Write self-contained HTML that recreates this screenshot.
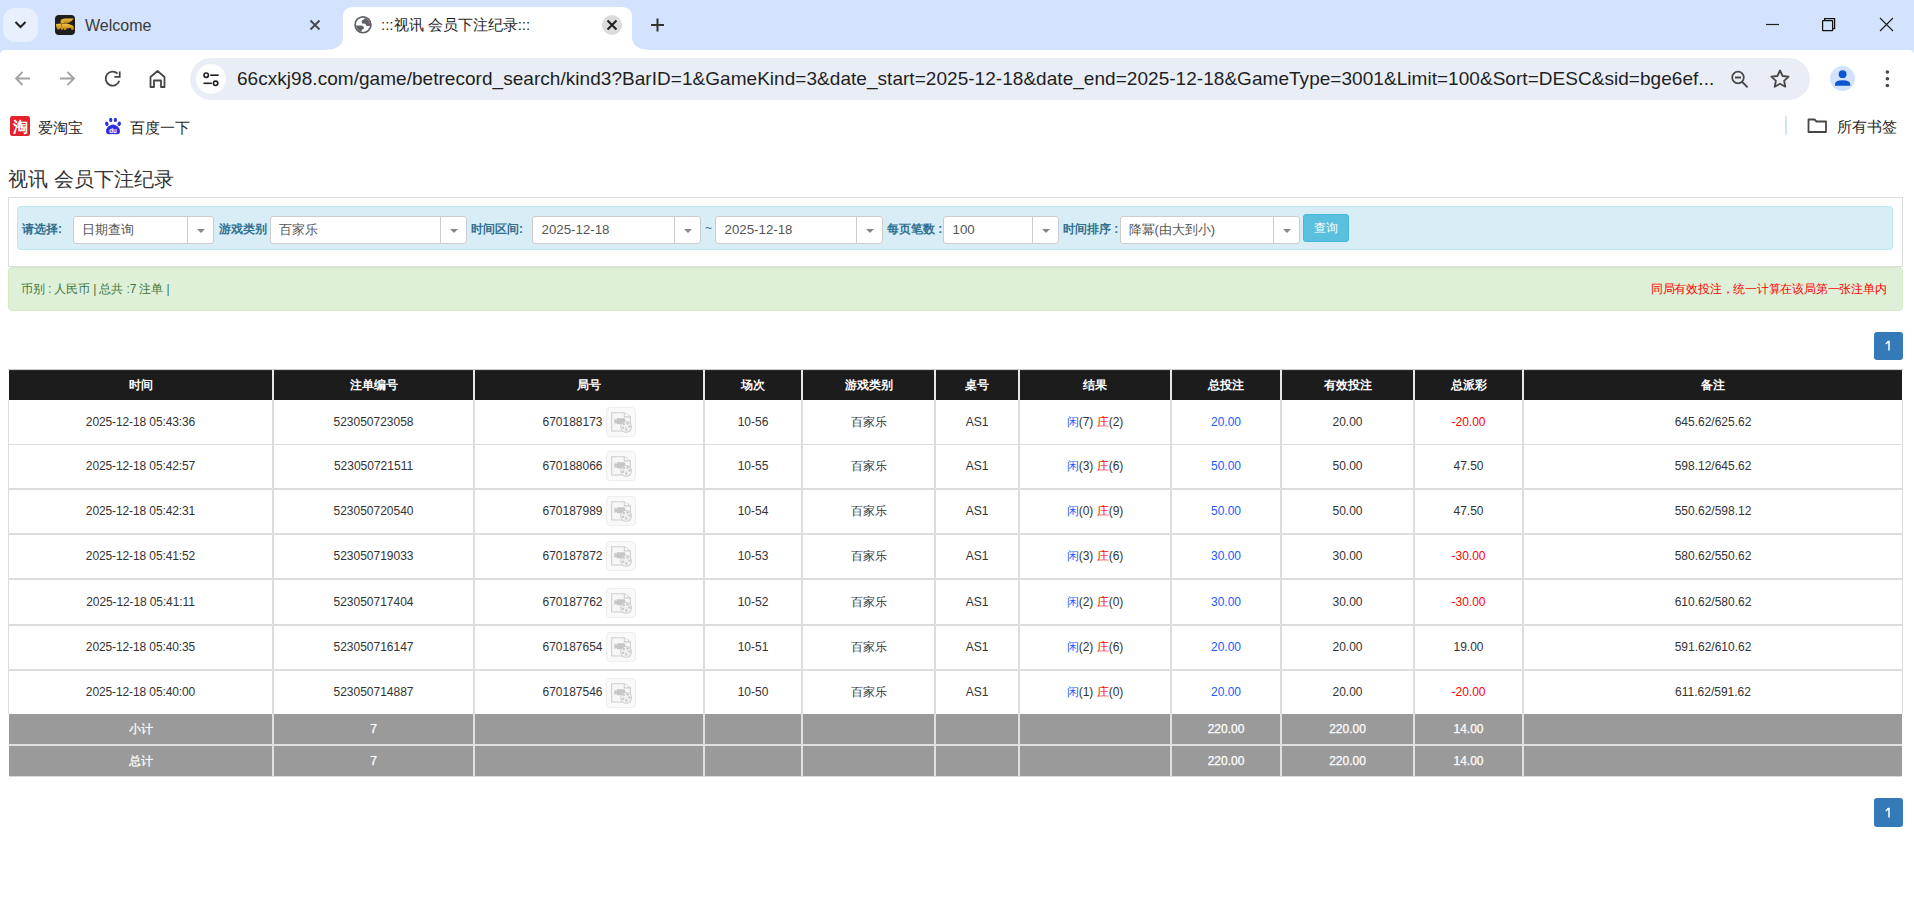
<!DOCTYPE html>
<html><head><meta charset="utf-8">
<style>
*{margin:0;padding:0;box-sizing:border-box}
html,body{width:1914px;height:903px;overflow:hidden;background:#fff;font-family:"Liberation Sans",sans-serif;color:#333}
.abs{position:absolute}
#tabstrip{position:absolute;left:0;top:0;width:1914px;height:62px;background:#d3e3fd}
#toolbar{position:absolute;left:0;top:50px;width:1914px;height:95px;background:#fff;border-radius:5px 5px 0 0}
.ctext{font-size:15px;color:#1f1f1f;white-space:nowrap}
#omni{position:absolute;left:190px;top:58px;width:1620px;height:42px;border-radius:21px;background:#e9eef6}
#url{position:absolute;left:237px;top:68px;font-size:19px;color:#1f1f1f;white-space:nowrap;letter-spacing:0.04px}
/* page */
#title{position:absolute;left:8px;top:166px;font-size:20px;color:#333;white-space:nowrap}
#panel{position:absolute;left:8px;top:197px;width:1895px;height:70px;border:1px solid #ddd}
#info{position:absolute;left:17px;top:206px;width:1876px;height:44px;background:#d9edf7;border:1px solid #bce8f1;border-radius:4px}
.lbl{position:absolute;top:221px;font-size:12px;font-weight:bold;color:#31708f;white-space:nowrap}
.sel{position:absolute;top:216px;height:28px;background:#fff;border:1px solid #ccc;border-radius:3px;font-size:13px;color:#555;white-space:nowrap}
.sel span{position:absolute;left:9px;top:5px}
.sel span.cj{left:7.5px;top:3.5px}
.sel span.nm{left:8.5px;top:4.5px;font-size:13.3px}
.sel i{position:absolute;top:0;right:0;width:26.5px;height:26px;border-left:1px solid #ccc}
.sel i:after{content:"";position:absolute;left:9px;top:11.5px;border-left:4px solid transparent;border-right:4px solid transparent;border-top:4px solid #888}
#btn{position:absolute;left:1303px;top:214px;width:46px;height:28px;background:#5bc0de;border:1px solid #46b8da;border-radius:3px;color:#fff;font-size:12px;text-align:center;line-height:26px}
#green{position:absolute;left:8px;top:267px;width:1895px;height:44px;background:#dff0d8;border:1px solid #d6e9c6;border-radius:4px}
#gtext{position:absolute;left:21px;top:280.5px;font-size:12px;color:#3c763d;white-space:nowrap;letter-spacing:-0.12px}
#rtext{position:absolute;right:27.5px;top:281px;font-size:12px;color:#f00;white-space:nowrap;letter-spacing:-0.22px}
.page1{position:absolute;left:1874px;width:29px;height:28px;background:#337ab7;border-radius:3px}
table{position:absolute;left:8px;top:370px;border-collapse:collapse;table-layout:fixed;width:1895px;font-size:12px;color:#333}
th{background:#1c1c1c;color:#fff;height:30px;font-weight:bold;border-left:2px solid #eee;border-right:2px solid #eee}
td{text-align:center;height:45px;border:1px solid #ddd}

.t{position:absolute;width:400px;height:16px;line-height:16px;text-align:center;font-size:12px;color:#333;white-space:nowrap}
.th{color:#fff;font-weight:bold}
.tw{color:#fff;-webkit-text-stroke:0.25px #fff}
.b{color:#1a5cff}
.r{color:#f00}
.ico{display:inline-block;vertical-align:middle;width:30px;height:30px;margin:-7px 0 -7px 3px;border:1px solid #eee;background:#f9f9f9;border-radius:4px;position:relative}
.ico svg{position:absolute;left:-1px;top:-1px}
</style></head><body>
<div id="tabstrip"></div>
<div id="toolbar"></div>
<div id="omni"></div>
<svg class="abs" style="left:0;top:0" width="1914" height="145" viewBox="0 0 1914 145">
  <rect x="3" y="8" width="35" height="34" rx="12" fill="#e8f0fe"/>
  <path d="M15.5 22l5 5 5-5" fill="none" stroke="#1f1f1f" stroke-width="2"/>
  <!-- active tab -->
  <path d="M323 50 Q343 50 343 37 V17 Q343 7 353 7 H622 Q632 7 632 17 V37 Q632 50 652 50 Z" fill="#fff"/>
  <!-- welcome favicon -->
  <defs><linearGradient id="gold" x1="0" y1="0" x2="0" y2="1"><stop offset="0" stop-color="#f2c744"/><stop offset="1" stop-color="#b97f12"/></linearGradient><clipPath id="gclip"><circle cx="363" cy="24.8" r="7.1"/></clipPath></defs>
  <rect x="55" y="15" width="20" height="20" rx="4" fill="#1e1e1e"/>
  <path d="M60.5 20 Q63 17.8 67 18.6 L73.8 18.4 Q72 21.5 68 23.2 L63 23 Z" fill="url(#gold)"/>
  <circle cx="62.3" cy="21.8" r="1.9" fill="#e0ad2a"/>
  <path d="M56 24 L61.5 23.5 L61 28 Q59 30 57.5 29.5 Q56 27 56 24Z" fill="url(#gold)"/>
  <path d="M62 24 Q66 23 70 24.5 Q73.5 25 73.8 27.5 L73.5 30 L71.5 30 L71 28 L66.5 28.5 L66 30 L64 30 L63.5 28 L62.5 30 L61 30 Q61 26 62 24Z" fill="url(#gold)"/>
  <!-- inactive close -->
  <path d="M310.5 20.5l9 9M319.5 20.5l-9 9" stroke="#474747" stroke-width="1.8"/>
  <!-- globe -->
  <circle cx="363" cy="24.8" r="8.8" fill="#5f6368"/>
  <circle cx="363" cy="24.8" r="7.1" fill="#fff"/>
  <g clip-path="url(#gclip)" fill="#5f6368"><path d="M364.5 15 L364.5 19 Q363 19.6 362 20.5 Q361.2 22.5 362.3 23.6 L365 23.8 Q366.3 24.5 366.5 26 L372 26 L372 15 Z"/><path d="M353 25.5 L361.5 25.5 Q363.5 26 364 27.5 Q364 29.3 362.3 29.5 Q361.2 30.2 361.5 34 L353 34 Z"/></g>
  <!-- active close -->
  <circle cx="612" cy="25" r="10" fill="#dcdcdc"/>
  <path d="M607.5 20.5l9 9M616.5 20.5l-9 9" stroke="#1f1f1f" stroke-width="2"/>
  <!-- plus -->
  <path d="M657.5 18.5v13M651 25h13" stroke="#333" stroke-width="2"/>
  <!-- window controls -->
  <path d="M1766 24.5h13" stroke="#1f1f1f" stroke-width="1.2"/>
  <rect x="1822.6" y="20.6" width="10" height="10" rx="0.4" fill="none" stroke="#111" stroke-width="1.25"/>
  <path d="M1824.6 20.6V18.6H1834.6V28.6H1832.6" fill="none" stroke="#111" stroke-width="1.25"/>
  <path d="M1880 18l13 13M1893 18l-13 13" stroke="#1f1f1f" stroke-width="1.2"/>
  <!-- toolbar icons -->
  <path d="M30 78.5H16M22.5 72l-6.5 6.5 6.5 6.5" fill="none" stroke="#a3a3a3" stroke-width="1.8"/>
  <path d="M60 78.5h14M67.5 72l6.5 6.5-6.5 6.5" fill="none" stroke="#a3a3a3" stroke-width="1.8"/>
  <path d="M119.3 80.8 A7 7 0 1 1 117.5 73.6" fill="none" stroke="#474747" stroke-width="1.8"/>
  <path d="M114.3 76.9 H119.7 V71.4" fill="none" stroke="#474747" stroke-width="1.8"/>
  <path d="M150.5 87 V77 L157.5 71 L164.5 77 V87 H161 V80.5 H154 V87 Z" fill="none" stroke="#474747" stroke-width="1.8" stroke-linejoin="round"/>
  <circle cx="211" cy="79" r="15" fill="#fdfdfe"/>
  <circle cx="206.2" cy="75.2" r="2.2" fill="none" stroke="#1f1f1f" stroke-width="1.6"/>
  <path d="M210.2 75.2h8.5" stroke="#1f1f1f" stroke-width="1.6"/>
  <circle cx="215.6" cy="83.3" r="2.2" fill="none" stroke="#1f1f1f" stroke-width="1.6"/>
  <path d="M203.5 83.3h8.3" stroke="#1f1f1f" stroke-width="1.6"/>
  <!-- zoom -->
  <circle cx="1738" cy="77.5" r="5.8" fill="none" stroke="#474747" stroke-width="1.8"/>
  <path d="M1735 77.5h6M1742.3 82l5.3 5.3" stroke="#474747" stroke-width="1.8"/>
  <!-- star -->
  <path d="M1780 70.5l2.6 5.5 6 .7-4.5 4.1 1.2 5.9-5.3-3-5.3 3 1.2-5.9-4.5-4.1 6-.7z" fill="none" stroke="#474747" stroke-width="1.8" stroke-linejoin="round"/>
  <!-- profile -->
  <circle cx="1842.5" cy="78.5" r="12.5" fill="#d3e3fd"/>
  <circle cx="1842.6" cy="74.2" r="3.9" fill="#0b57d0"/>
  <path d="M1835 85.8 V84.2 Q1835 80.3 1842.6 80.3 Q1850.2 80.3 1850.2 84.2 V85.8 Z" fill="#0b57d0"/>
  <circle cx="1887.4" cy="72" r="1.8" fill="#474747"/><circle cx="1887.4" cy="78.7" r="1.8" fill="#474747"/><circle cx="1887.4" cy="85.5" r="1.8" fill="#474747"/>
  <!-- bookmark bar -->
  <rect x="10" y="116" width="20" height="20" rx="2.5" fill="#e4212c"/>
  <text x="20" y="132" font-size="15" font-weight="bold" fill="#fff" text-anchor="middle" font-family="Liberation Sans">淘</text>
  <g fill="#2932e1">
    <ellipse cx="106.8" cy="123.8" rx="1.7" ry="2.2" transform="rotate(-20 106.8 123.8)"/><ellipse cx="110.7" cy="119.9" rx="1.6" ry="2.2"/><ellipse cx="115.4" cy="119.9" rx="1.6" ry="2.2"/><ellipse cx="119.2" cy="123.8" rx="1.7" ry="2.2" transform="rotate(20 119.2 123.8)"/>
    <path d="M106 131.3 Q106 127.5 110 125.6 Q113 123.6 116 125.6 Q120 127.5 120 131.3 Q120 134.5 116.5 134.2 Q113 133.7 109.5 134.2 Q106 134.5 106 131.3Z"/>
  </g>
  <text x="113" y="132.6" font-size="6.3" font-weight="bold" fill="#fff" text-anchor="middle" font-family="Liberation Sans">du</text>
  <rect x="1785" y="116" width="2" height="19" rx="1" fill="#d3e3fd"/>
  <path d="M1808.5 119.5 h6 l2 2 h9.5 v10.5 h-17.5 z" fill="none" stroke="#474747" stroke-width="1.8" stroke-linejoin="round"/>
</svg>
<div class="abs ctext" style="left:85px;top:17px;color:#3a3a3a;font-size:16px">Welcome</div>
<div class="abs ctext" style="left:381px;top:16px;color:#1f1f1f">:::视讯 会员下注纪录:::</div>
<div class="abs ctext" style="left:37.5px;top:117.5px;font-size:15.3px">爱淘宝</div>
<div class="abs ctext" style="left:130px;top:117.5px;font-size:15.3px">百度一下</div>
<div class="abs ctext" style="left:1837px;top:117px;font-size:15.3px">所有书签</div>

<div id="url">66cxkj98.com/game/betrecord_search/kind3?BarID=1&amp;GameKind=3&amp;date_start=2025-12-18&amp;date_end=2025-12-18&amp;GameType=3001&amp;Limit=100&amp;Sort=DESC&amp;sid=bge6ef...</div>

<div id="title">视讯 会员下注纪录</div>
<div id="panel"></div>
<div id="info"></div>
<div id="green"></div>
<div class="lbl" style="left:22px">请选择:</div>
<div class="sel" style="left:73px;width:141px"><span class="cj">日期查询</span><i></i></div>
<div class="lbl" style="left:219px">游戏类别</div>
<div class="sel" style="left:270px;width:197px"><span class="cj">百家乐</span><i></i></div>
<div class="lbl" style="left:471px">时间区间:</div>
<div class="sel" style="left:532px;width:169px"><span class="nm">2025-12-18</span><i></i></div>
<div class="lbl" style="left:705px;font-weight:normal">~</div>
<div class="sel" style="left:715px;width:168px"><span class="nm">2025-12-18</span><i></i></div>
<div class="lbl" style="left:887px">每页笔数 :</div>
<div class="sel" style="left:943px;width:116px"><span class="nm">100</span><i></i></div>
<div class="lbl" style="left:1063px">时间排序 :</div>
<div class="sel" style="left:1120px;width:180px"><span class="cj" style="top:4px">降冪(由大到小)</span><i></i></div>
<div id="btn">查询</div>

<div id="gtext">币别 : 人民币 | 总共 :7 注单 |</div>
<div id="rtext">同局有效投注，统一计算在该局第一张注单内</div>
<div class="page1" style="top:332px"><svg width="29" height="28" style="position:absolute;left:0;top:0"><path d="M11.7 11.9 Q13.5 11 14.3 9.4 H15 V18.6" fill="none" stroke="#fff" stroke-width="1.5"/></svg></div>
<div class="page1" style="top:798px;height:29px"><svg width="29" height="28" style="position:absolute;left:0;top:0.5px"><path d="M11.7 11.9 Q13.5 11 14.3 9.4 H15 V18.6" fill="none" stroke="#fff" stroke-width="1.5"/></svg></div>
<div class="abs" style="left:8px;top:369px;width:1895px;height:1px;background:#c8c8c8"></div>
<div class="abs" style="left:9px;top:370px;width:1893px;height:30px;background:#1c1c1c;border-top:1px solid #2a2a2a"></div>
<div class="abs" style="left:8px;top:400px;width:1px;height:314px;background:#ddd"></div>
<div class="abs" style="left:1902px;top:400px;width:1px;height:314px;background:#ddd"></div>
<div class="abs" style="left:272px;top:370px;width:2px;height:30px;background:#e8e8e8"></div>
<div class="abs" style="left:272px;top:400px;width:2px;height:314px;background:#ddd"></div>
<div class="abs" style="left:473px;top:370px;width:2px;height:30px;background:#e8e8e8"></div>
<div class="abs" style="left:473px;top:400px;width:2px;height:314px;background:#ddd"></div>
<div class="abs" style="left:703px;top:370px;width:2px;height:30px;background:#e8e8e8"></div>
<div class="abs" style="left:703px;top:400px;width:2px;height:314px;background:#ddd"></div>
<div class="abs" style="left:801px;top:370px;width:2px;height:30px;background:#e8e8e8"></div>
<div class="abs" style="left:801px;top:400px;width:2px;height:314px;background:#ddd"></div>
<div class="abs" style="left:934px;top:370px;width:2px;height:30px;background:#e8e8e8"></div>
<div class="abs" style="left:934px;top:400px;width:2px;height:314px;background:#ddd"></div>
<div class="abs" style="left:1018px;top:370px;width:2px;height:30px;background:#e8e8e8"></div>
<div class="abs" style="left:1018px;top:400px;width:2px;height:314px;background:#ddd"></div>
<div class="abs" style="left:1170px;top:370px;width:2px;height:30px;background:#e8e8e8"></div>
<div class="abs" style="left:1170px;top:400px;width:2px;height:314px;background:#ddd"></div>
<div class="abs" style="left:1280px;top:370px;width:2px;height:30px;background:#e8e8e8"></div>
<div class="abs" style="left:1280px;top:400px;width:2px;height:314px;background:#ddd"></div>
<div class="abs" style="left:1413px;top:370px;width:2px;height:30px;background:#e8e8e8"></div>
<div class="abs" style="left:1413px;top:400px;width:2px;height:314px;background:#ddd"></div>
<div class="abs" style="left:1522px;top:370px;width:2px;height:30px;background:#e8e8e8"></div>
<div class="abs" style="left:1522px;top:400px;width:2px;height:314px;background:#ddd"></div>
<div class="abs" style="left:8px;top:444px;width:1895px;height:1px;background:#ddd"></div>
<div class="abs" style="left:8px;top:488px;width:1895px;height:2px;background:#ddd"></div>
<div class="abs" style="left:8px;top:533px;width:1895px;height:2px;background:#ddd"></div>
<div class="abs" style="left:8px;top:578px;width:1895px;height:2px;background:#ddd"></div>
<div class="abs" style="left:8px;top:624px;width:1895px;height:2px;background:#ddd"></div>
<div class="abs" style="left:8px;top:669px;width:1895px;height:2px;background:#ddd"></div>
<div class="abs" style="left:9px;top:714px;width:1893px;height:30px;background:#9a9a9a"></div>
<div class="abs" style="left:9px;top:746px;width:1893px;height:30px;background:#9a9a9a"></div>
<div class="abs" style="left:9px;top:776px;width:1893px;height:1px;background:#d8d8d8;border-radius:0 0 2px 2px"></div>
<div class="abs" style="left:9px;top:744px;width:1893px;height:2px;background:#e0e0e0"></div>
<div class="abs" style="left:272px;top:714px;width:2px;height:62px;background:#e0e0e0"></div>
<div class="abs" style="left:473px;top:714px;width:2px;height:62px;background:#e0e0e0"></div>
<div class="abs" style="left:703px;top:714px;width:2px;height:62px;background:#e0e0e0"></div>
<div class="abs" style="left:801px;top:714px;width:2px;height:62px;background:#e0e0e0"></div>
<div class="abs" style="left:934px;top:714px;width:2px;height:62px;background:#e0e0e0"></div>
<div class="abs" style="left:1018px;top:714px;width:2px;height:62px;background:#e0e0e0"></div>
<div class="abs" style="left:1170px;top:714px;width:2px;height:62px;background:#e0e0e0"></div>
<div class="abs" style="left:1280px;top:714px;width:2px;height:62px;background:#e0e0e0"></div>
<div class="abs" style="left:1413px;top:714px;width:2px;height:62px;background:#e0e0e0"></div>
<div class="abs" style="left:1522px;top:714px;width:2px;height:62px;background:#e0e0e0"></div>
<div class="t th" style="left:-59.5px;top:376.5px;">时间</div>
<div class="t th" style="left:173.5px;top:376.5px;">注单编号</div>
<div class="t th" style="left:389.0px;top:376.5px;">局号</div>
<div class="t th" style="left:553.0px;top:376.5px;">场次</div>
<div class="t th" style="left:668.5px;top:376.5px;">游戏类别</div>
<div class="t th" style="left:777.0px;top:376.5px;">桌号</div>
<div class="t th" style="left:895.0px;top:376.5px;">结果</div>
<div class="t th" style="left:1026.0px;top:376.5px;">总投注</div>
<div class="t th" style="left:1147.5px;top:376.5px;">有效投注</div>
<div class="t th" style="left:1268.5px;top:376.5px;">总派彩</div>
<div class="t th" style="left:1513.0px;top:376.5px;">备注</div>
<div class="t" style="left:-59.5px;top:413.5px;letter-spacing:-0.11px">2025-12-18 05:43:36</div>
<div class="t" style="left:173.5px;top:413.5px;">523050723058</div>
<div class="t" style="left:389.0px;top:413.5px;">670188173<span class="ico"><svg width="30" height="30" viewBox="0 0 30 30"><path d="M5.7 5.7h12.6l6 4.2v14.1h-18.6z" fill="#f7f7f7" stroke="#cdcdcd" stroke-width="1.1"/><path d="M18.3 5.7v4.2h6" fill="#fbfbfb" stroke="#cdcdcd" stroke-width="1.1"/><path d="M8.4 11.6 L10.2 13 H10.6 V11.3 H18.6 L19.3 12.3 V17.3 H10.6 V15.8 H10.2 L8.4 17.2 Z" fill="#c6c6c6"/><circle cx="20.1" cy="19.9" r="5.4" fill="#f4f4f4" stroke="#cdcdcd" stroke-width="1"/><g fill="#c9c9c9"><circle cx="17.8" cy="17.1" r="1.25"/><circle cx="21.5" cy="16.4" r="1.25"/><circle cx="23.4" cy="19.6" r="1.25"/><circle cx="20.3" cy="22.6" r="1.25"/><circle cx="17.1" cy="20.8" r="1.25"/><circle cx="20.1" cy="19.9" r="0.5"/></g></svg></span></div>
<div class="t" style="left:553.0px;top:413.5px;">10-56</div>
<div class="t" style="left:668.5px;top:413.5px;">百家乐</div>
<div class="t" style="left:777.0px;top:413.5px;">AS1</div>
<div class="t" style="left:895.0px;top:413.5px;"><span class="b">闲</span>(7) <span class="r">庄</span>(2)</div>
<div class="t" style="left:1026.0px;top:413.5px;"><span class="b">20.00</span></div>
<div class="t" style="left:1147.5px;top:413.5px;">20.00</div>
<div class="t" style="left:1268.5px;top:413.5px;"><span class="r">-20.00</span></div>
<div class="t" style="left:1513.0px;top:413.5px;">645.62/625.62</div>
<div class="t" style="left:-59.5px;top:457.5px;letter-spacing:-0.11px">2025-12-18 05:42:57</div>
<div class="t" style="left:173.5px;top:457.5px;">523050721511</div>
<div class="t" style="left:389.0px;top:457.5px;">670188066<span class="ico"><svg width="30" height="30" viewBox="0 0 30 30"><path d="M5.7 5.7h12.6l6 4.2v14.1h-18.6z" fill="#f7f7f7" stroke="#cdcdcd" stroke-width="1.1"/><path d="M18.3 5.7v4.2h6" fill="#fbfbfb" stroke="#cdcdcd" stroke-width="1.1"/><path d="M8.4 11.6 L10.2 13 H10.6 V11.3 H18.6 L19.3 12.3 V17.3 H10.6 V15.8 H10.2 L8.4 17.2 Z" fill="#c6c6c6"/><circle cx="20.1" cy="19.9" r="5.4" fill="#f4f4f4" stroke="#cdcdcd" stroke-width="1"/><g fill="#c9c9c9"><circle cx="17.8" cy="17.1" r="1.25"/><circle cx="21.5" cy="16.4" r="1.25"/><circle cx="23.4" cy="19.6" r="1.25"/><circle cx="20.3" cy="22.6" r="1.25"/><circle cx="17.1" cy="20.8" r="1.25"/><circle cx="20.1" cy="19.9" r="0.5"/></g></svg></span></div>
<div class="t" style="left:553.0px;top:457.5px;">10-55</div>
<div class="t" style="left:668.5px;top:457.5px;">百家乐</div>
<div class="t" style="left:777.0px;top:457.5px;">AS1</div>
<div class="t" style="left:895.0px;top:457.5px;"><span class="b">闲</span>(3) <span class="r">庄</span>(6)</div>
<div class="t" style="left:1026.0px;top:457.5px;"><span class="b">50.00</span></div>
<div class="t" style="left:1147.5px;top:457.5px;">50.00</div>
<div class="t" style="left:1268.5px;top:457.5px;"><span class="">47.50</span></div>
<div class="t" style="left:1513.0px;top:457.5px;">598.12/645.62</div>
<div class="t" style="left:-59.5px;top:502.5px;letter-spacing:-0.11px">2025-12-18 05:42:31</div>
<div class="t" style="left:173.5px;top:502.5px;">523050720540</div>
<div class="t" style="left:389.0px;top:502.5px;">670187989<span class="ico"><svg width="30" height="30" viewBox="0 0 30 30"><path d="M5.7 5.7h12.6l6 4.2v14.1h-18.6z" fill="#f7f7f7" stroke="#cdcdcd" stroke-width="1.1"/><path d="M18.3 5.7v4.2h6" fill="#fbfbfb" stroke="#cdcdcd" stroke-width="1.1"/><path d="M8.4 11.6 L10.2 13 H10.6 V11.3 H18.6 L19.3 12.3 V17.3 H10.6 V15.8 H10.2 L8.4 17.2 Z" fill="#c6c6c6"/><circle cx="20.1" cy="19.9" r="5.4" fill="#f4f4f4" stroke="#cdcdcd" stroke-width="1"/><g fill="#c9c9c9"><circle cx="17.8" cy="17.1" r="1.25"/><circle cx="21.5" cy="16.4" r="1.25"/><circle cx="23.4" cy="19.6" r="1.25"/><circle cx="20.3" cy="22.6" r="1.25"/><circle cx="17.1" cy="20.8" r="1.25"/><circle cx="20.1" cy="19.9" r="0.5"/></g></svg></span></div>
<div class="t" style="left:553.0px;top:502.5px;">10-54</div>
<div class="t" style="left:668.5px;top:502.5px;">百家乐</div>
<div class="t" style="left:777.0px;top:502.5px;">AS1</div>
<div class="t" style="left:895.0px;top:502.5px;"><span class="b">闲</span>(0) <span class="r">庄</span>(9)</div>
<div class="t" style="left:1026.0px;top:502.5px;"><span class="b">50.00</span></div>
<div class="t" style="left:1147.5px;top:502.5px;">50.00</div>
<div class="t" style="left:1268.5px;top:502.5px;"><span class="">47.50</span></div>
<div class="t" style="left:1513.0px;top:502.5px;">550.62/598.12</div>
<div class="t" style="left:-59.5px;top:547.5px;letter-spacing:-0.11px">2025-12-18 05:41:52</div>
<div class="t" style="left:173.5px;top:547.5px;">523050719033</div>
<div class="t" style="left:389.0px;top:547.5px;">670187872<span class="ico"><svg width="30" height="30" viewBox="0 0 30 30"><path d="M5.7 5.7h12.6l6 4.2v14.1h-18.6z" fill="#f7f7f7" stroke="#cdcdcd" stroke-width="1.1"/><path d="M18.3 5.7v4.2h6" fill="#fbfbfb" stroke="#cdcdcd" stroke-width="1.1"/><path d="M8.4 11.6 L10.2 13 H10.6 V11.3 H18.6 L19.3 12.3 V17.3 H10.6 V15.8 H10.2 L8.4 17.2 Z" fill="#c6c6c6"/><circle cx="20.1" cy="19.9" r="5.4" fill="#f4f4f4" stroke="#cdcdcd" stroke-width="1"/><g fill="#c9c9c9"><circle cx="17.8" cy="17.1" r="1.25"/><circle cx="21.5" cy="16.4" r="1.25"/><circle cx="23.4" cy="19.6" r="1.25"/><circle cx="20.3" cy="22.6" r="1.25"/><circle cx="17.1" cy="20.8" r="1.25"/><circle cx="20.1" cy="19.9" r="0.5"/></g></svg></span></div>
<div class="t" style="left:553.0px;top:547.5px;">10-53</div>
<div class="t" style="left:668.5px;top:547.5px;">百家乐</div>
<div class="t" style="left:777.0px;top:547.5px;">AS1</div>
<div class="t" style="left:895.0px;top:547.5px;"><span class="b">闲</span>(3) <span class="r">庄</span>(6)</div>
<div class="t" style="left:1026.0px;top:547.5px;"><span class="b">30.00</span></div>
<div class="t" style="left:1147.5px;top:547.5px;">30.00</div>
<div class="t" style="left:1268.5px;top:547.5px;"><span class="r">-30.00</span></div>
<div class="t" style="left:1513.0px;top:547.5px;">580.62/550.62</div>
<div class="t" style="left:-59.5px;top:593.8px;letter-spacing:-0.11px">2025-12-18 05:41:11</div>
<div class="t" style="left:173.5px;top:593.8px;">523050717404</div>
<div class="t" style="left:389.0px;top:593.8px;">670187762<span class="ico"><svg width="30" height="30" viewBox="0 0 30 30"><path d="M5.7 5.7h12.6l6 4.2v14.1h-18.6z" fill="#f7f7f7" stroke="#cdcdcd" stroke-width="1.1"/><path d="M18.3 5.7v4.2h6" fill="#fbfbfb" stroke="#cdcdcd" stroke-width="1.1"/><path d="M8.4 11.6 L10.2 13 H10.6 V11.3 H18.6 L19.3 12.3 V17.3 H10.6 V15.8 H10.2 L8.4 17.2 Z" fill="#c6c6c6"/><circle cx="20.1" cy="19.9" r="5.4" fill="#f4f4f4" stroke="#cdcdcd" stroke-width="1"/><g fill="#c9c9c9"><circle cx="17.8" cy="17.1" r="1.25"/><circle cx="21.5" cy="16.4" r="1.25"/><circle cx="23.4" cy="19.6" r="1.25"/><circle cx="20.3" cy="22.6" r="1.25"/><circle cx="17.1" cy="20.8" r="1.25"/><circle cx="20.1" cy="19.9" r="0.5"/></g></svg></span></div>
<div class="t" style="left:553.0px;top:593.8px;">10-52</div>
<div class="t" style="left:668.5px;top:593.8px;">百家乐</div>
<div class="t" style="left:777.0px;top:593.8px;">AS1</div>
<div class="t" style="left:895.0px;top:593.8px;"><span class="b">闲</span>(2) <span class="r">庄</span>(0)</div>
<div class="t" style="left:1026.0px;top:593.8px;"><span class="b">30.00</span></div>
<div class="t" style="left:1147.5px;top:593.8px;">30.00</div>
<div class="t" style="left:1268.5px;top:593.8px;"><span class="r">-30.00</span></div>
<div class="t" style="left:1513.0px;top:593.8px;">610.62/580.62</div>
<div class="t" style="left:-59.5px;top:638.5px;letter-spacing:-0.11px">2025-12-18 05:40:35</div>
<div class="t" style="left:173.5px;top:638.5px;">523050716147</div>
<div class="t" style="left:389.0px;top:638.5px;">670187654<span class="ico"><svg width="30" height="30" viewBox="0 0 30 30"><path d="M5.7 5.7h12.6l6 4.2v14.1h-18.6z" fill="#f7f7f7" stroke="#cdcdcd" stroke-width="1.1"/><path d="M18.3 5.7v4.2h6" fill="#fbfbfb" stroke="#cdcdcd" stroke-width="1.1"/><path d="M8.4 11.6 L10.2 13 H10.6 V11.3 H18.6 L19.3 12.3 V17.3 H10.6 V15.8 H10.2 L8.4 17.2 Z" fill="#c6c6c6"/><circle cx="20.1" cy="19.9" r="5.4" fill="#f4f4f4" stroke="#cdcdcd" stroke-width="1"/><g fill="#c9c9c9"><circle cx="17.8" cy="17.1" r="1.25"/><circle cx="21.5" cy="16.4" r="1.25"/><circle cx="23.4" cy="19.6" r="1.25"/><circle cx="20.3" cy="22.6" r="1.25"/><circle cx="17.1" cy="20.8" r="1.25"/><circle cx="20.1" cy="19.9" r="0.5"/></g></svg></span></div>
<div class="t" style="left:553.0px;top:638.5px;">10-51</div>
<div class="t" style="left:668.5px;top:638.5px;">百家乐</div>
<div class="t" style="left:777.0px;top:638.5px;">AS1</div>
<div class="t" style="left:895.0px;top:638.5px;"><span class="b">闲</span>(2) <span class="r">庄</span>(6)</div>
<div class="t" style="left:1026.0px;top:638.5px;"><span class="b">20.00</span></div>
<div class="t" style="left:1147.5px;top:638.5px;">20.00</div>
<div class="t" style="left:1268.5px;top:638.5px;"><span class="">19.00</span></div>
<div class="t" style="left:1513.0px;top:638.5px;">591.62/610.62</div>
<div class="t" style="left:-59.5px;top:683.5px;letter-spacing:-0.11px">2025-12-18 05:40:00</div>
<div class="t" style="left:173.5px;top:683.5px;">523050714887</div>
<div class="t" style="left:389.0px;top:683.5px;">670187546<span class="ico" style="top:1px"><svg width="30" height="30" viewBox="0 0 30 30"><path d="M5.7 5.7h12.6l6 4.2v14.1h-18.6z" fill="#f7f7f7" stroke="#cdcdcd" stroke-width="1.1"/><path d="M18.3 5.7v4.2h6" fill="#fbfbfb" stroke="#cdcdcd" stroke-width="1.1"/><path d="M8.4 11.6 L10.2 13 H10.6 V11.3 H18.6 L19.3 12.3 V17.3 H10.6 V15.8 H10.2 L8.4 17.2 Z" fill="#c6c6c6"/><circle cx="20.1" cy="19.9" r="5.4" fill="#f4f4f4" stroke="#cdcdcd" stroke-width="1"/><g fill="#c9c9c9"><circle cx="17.8" cy="17.1" r="1.25"/><circle cx="21.5" cy="16.4" r="1.25"/><circle cx="23.4" cy="19.6" r="1.25"/><circle cx="20.3" cy="22.6" r="1.25"/><circle cx="17.1" cy="20.8" r="1.25"/><circle cx="20.1" cy="19.9" r="0.5"/></g></svg></span></div>
<div class="t" style="left:553.0px;top:683.5px;">10-50</div>
<div class="t" style="left:668.5px;top:683.5px;">百家乐</div>
<div class="t" style="left:777.0px;top:683.5px;">AS1</div>
<div class="t" style="left:895.0px;top:683.5px;"><span class="b">闲</span>(1) <span class="r">庄</span>(0)</div>
<div class="t" style="left:1026.0px;top:683.5px;"><span class="b">20.00</span></div>
<div class="t" style="left:1147.5px;top:683.5px;">20.00</div>
<div class="t" style="left:1268.5px;top:683.5px;"><span class="r">-20.00</span></div>
<div class="t" style="left:1513.0px;top:683.5px;">611.62/591.62</div>
<div class="t tw" style="left:-59.5px;top:720.5px;">小计</div>
<div class="t tw" style="left:173.5px;top:720.5px;">7</div>
<div class="t tw" style="left:1026.0px;top:720.5px;">220.00</div>
<div class="t tw" style="left:1147.5px;top:720.5px;">220.00</div>
<div class="t tw" style="left:1268.5px;top:720.5px;">14.00</div>
<div class="t tw" style="left:-59.5px;top:752.5px;">总计</div>
<div class="t tw" style="left:173.5px;top:752.5px;">7</div>
<div class="t tw" style="left:1026.0px;top:752.5px;">220.00</div>
<div class="t tw" style="left:1147.5px;top:752.5px;">220.00</div>
<div class="t tw" style="left:1268.5px;top:752.5px;">14.00</div>
</body></html>
